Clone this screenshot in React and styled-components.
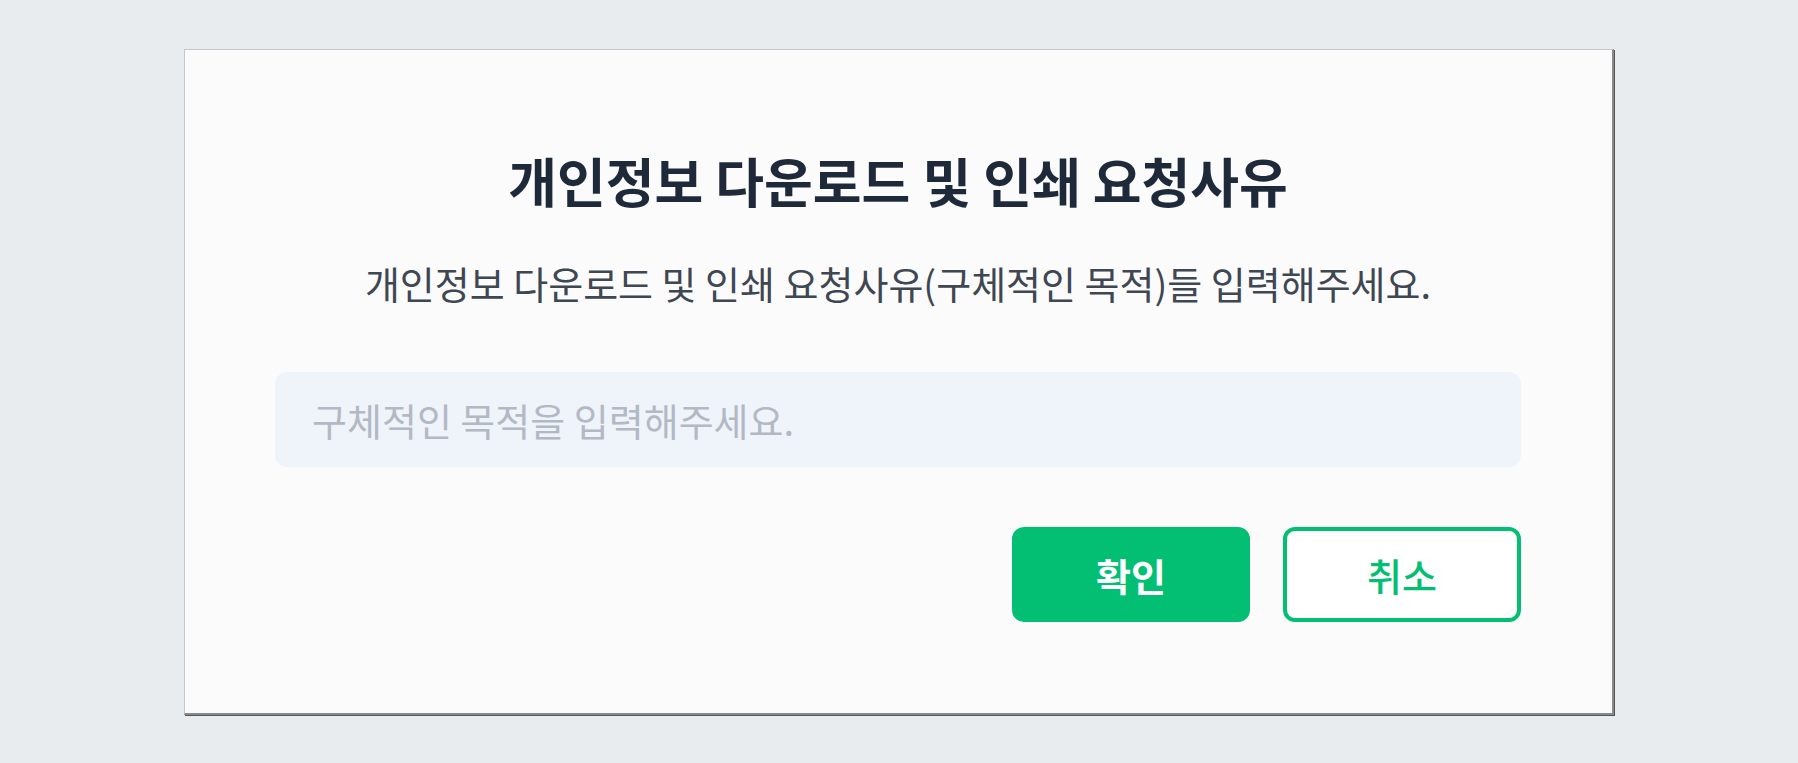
import React from "react";
import styled, { createGlobalStyle } from "styled-components";

const GlobalStyle = createGlobalStyle`
  * { box-sizing: border-box; }
  body {
    margin: 0;
    background: #e8ecef;
    font-family: "Noto Sans CJK KR", "Noto Sans", sans-serif;
  }
`;

const Page = styled.div`
  height: 100vh;
  display: flex;
  align-items: center;
  justify-content: center;
`;

const Dialog = styled.form`
  width: 1430px;
  display: flex;
  flex-direction: column;
  align-items: center;
  padding: 100px 91px 91px 90px;
  background: #fbfbfc;
  border-top: 1px solid #c3c7cb;
  border-left: 1px solid #c3c7cb;
  border-right: 2px solid #8a8a8a;
  border-bottom: 2px solid #8a8a8a;
  box-shadow: 1px 1px 0 #555;
`;

const Title = styled.h2`
  margin: 0;
  font-size: 53px;
  line-height: 60px;
  font-weight: 700;
  color: #1e2939;
`;

const Desc = styled.p`
  margin: 51px 0 0;
  font-size: 38px;
  line-height: 44px;
  color: #3f4753;
`;

const Input = styled.input`
  width: 100%;
  height: 95px;
  margin-top: 67px;
  padding: 0 37px;
  border: none;
  border-radius: 12px;
  background: #eff3fa;
  font-family: inherit;
  font-size: 38px;
  color: #333;
  outline: none;

  &::placeholder {
    color: #b3b9c4;
  }
`;

const Actions = styled.div`
  align-self: flex-end;
  display: flex;
  gap: 33px;
  margin-top: 60px;
`;

const Button = styled.button`
  width: 238px;
  height: 95px;
  border-radius: 12px;
  border: 4px solid #03bf74;
  background: ${(p) => (p.$primary ? "#03bf74" : "#fff")};
  color: ${(p) => (p.$primary ? "#fff" : "#03bf74")};
  font-family: inherit;
  font-size: 38px;
  font-weight: ${(p) => (p.$primary ? 700 : 500)};
  cursor: pointer;
`;

export default function App() {
  function handleSubmit(e) {
    e.preventDefault();
  }

  return (
    <Page>
      <GlobalStyle />
      <Dialog onSubmit={handleSubmit}>
        <Title>개인정보 다운로드 및 인쇄 요청사유</Title>
        <Desc>개인정보 다운로드 및 인쇄 요청사유(구체적인 목적)들 입력해주세요.</Desc>
        <Input type="text" placeholder="구체적인 목적을 입력해주세요." />
        <Actions>
          <Button type="submit" $primary>
            확인
          </Button>
          <Button type="button">취소</Button>
        </Actions>
      </Dialog>
    </Page>
  );
}
